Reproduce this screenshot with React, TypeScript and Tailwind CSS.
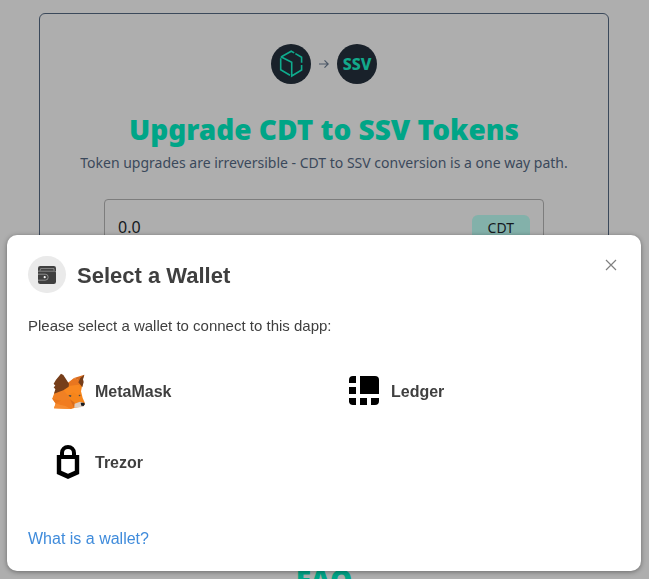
import type { ReactNode } from "react";

type Wallet = {
  name: string;
  icon: ReactNode;
};

const wallets: Wallet[] = [
  { name: "MetaMask", icon: <MetaMaskIcon /> },
  { name: "Ledger", icon: <LedgerIcon /> },
  { name: "Trezor", icon: <TrezorIcon /> }
];

export default function App() {
  return (
    <div className="h-screen overflow-hidden bg-[#aeaeae] font-['Noto_Sans',sans-serif]">
      <UpgradePage />
      <WalletModal />
    </div>
  );
}

function UpgradePage() {
  return (
    <main className="mx-auto max-w-[650px] pt-[13px] pr-10 pl-[39px]">
      <section className="flex min-h-[520px] flex-col items-center rounded-md border border-[#3b495b] pt-[30px]">
        <div className="flex items-center gap-2">
          <span className="flex size-10 items-center justify-center rounded-full bg-[#19212a]">
            <CdtLogo />
          </span>
          <ArrowIcon />
          <span className="flex size-10 items-center justify-center rounded-full bg-[#19212a] text-base font-extrabold text-[#13a98b]">
            SSV
          </span>
        </div>
        <h1 className="mt-[23px] text-center text-[28px] leading-11 font-black whitespace-nowrap text-[#00a587]">
          Upgrade CDT to SSV Tokens
        </h1>
        <p className="text-center text-sm leading-6 whitespace-nowrap text-[#3b495b]">
          Token upgrades are irreversible - CDT to SSV conversion is a one way path.
        </p>
        <div className="mt-6 flex h-20 w-full max-w-[440px] items-start justify-between rounded-sm border border-[#7d7d7d] px-[13px] pt-[15px]">
          <input
            aria-label="Amount"
            defaultValue="0.0"
            className="h-6 w-40 bg-transparent text-base text-[#15191d] outline-none"
          />
          <span className="rounded-md bg-[#83b1aa] px-4 py-px text-sm leading-6 text-[#15191d]">CDT</span>
        </div>
      </section>
      <h2 className="mt-7 text-center text-[28px] leading-9 font-black text-[#00a587]">FAQ</h2>
    </main>
  );
}

function WalletModal() {
  return (
    <div className="fixed inset-0 flex items-end justify-center p-2 pl-[7px]">
      <div
        role="dialog"
        aria-labelledby="wallet-title"
        className="relative w-full rounded-[10px] bg-white px-[21px] pt-[21px] pb-5 font-['Liberation_Sans',Arial,sans-serif] text-[#3f3f3f] shadow-[0_1px_5px_rgba(0,0,0,0.4)]"
      >
        <header className="flex items-center gap-[11px]">
          <span className="flex h-[37px] w-[38px] items-center justify-center rounded-full bg-[#eaeaea]">
            <WalletIcon />
          </span>
          <h3 id="wallet-title" className="pt-0.5 text-[22px] leading-8 font-bold">
            Select a Wallet
          </h3>
        </header>
        <p className="mt-[23px] text-[15px] leading-5">Please select a wallet to connect to this dapp:</p>
        <ul className="mt-5 grid grid-cols-2">
          {wallets.map((wallet) => (
            <li key={wallet.name} className="h-[71px]">
              <button type="button" className="flex h-[71px] items-center gap-2 pl-[21px] text-base font-bold">
                <span className="flex w-[38px] justify-center pb-0.5">{wallet.icon}</span>
                {wallet.name}
              </button>
            </li>
          ))}
        </ul>
        <a href="#wallet" className="mt-[29px] block w-fit text-base leading-6 text-[#3f8bdb]">
          What is a wallet?
        </a>
        <button type="button" aria-label="Close" className="absolute top-[22px] right-[22px] p-px">
          <svg viewBox="0 0 14 14" className="size-[14px]" fill="none" stroke="#808080" strokeWidth="1.2">
            <path d="M2 2 12 12M12 2 2 12" />
          </svg>
        </button>
      </div>
    </div>
  );
}

function CdtLogo() {
  return (
    <svg viewBox="0 0 26 28" className="h-7 w-[26px]" fill="none" stroke="#0fab8d" strokeWidth="1.6">
      <path d="M2.7 8.2v11.5l9.3 5.6" />
      <path d="M3 7 13.2 1.2l3 1.7" />
      <path d="M17.4 3.6 23.6 7.2v5.6" />
      <path d="M23.6 15v5L13.7 26V12.3L2.8 6.8" />
    </svg>
  );
}

function ArrowIcon() {
  return (
    <svg viewBox="0 0 10 10" className="size-[10px]" fill="none" stroke="#4b5766" strokeWidth="1.2">
      <path d="M0 5h9M5.5 1.3 9.2 5 5.5 8.7" />
    </svg>
  );
}

function WalletIcon() {
  return (
    <svg viewBox="0 0 18 18" className="size-[18px]">
      <rect width="18" height="18" rx="2.2" fill="#3f3f3f" />
      <path d="M0 5.2h16.5a1.5 1.5 0 0 1 1.5 1.2" fill="none" stroke="#a6a6a6" strokeWidth=".7" />
      <path d="M2 4.7 2.6 2.6H16v2" fill="none" stroke="#a6a6a6" strokeWidth=".7" />
      <path d="M0 8.2h7.2a3 3 0 0 1 0 6H0" fill="none" stroke="#b0b0b0" strokeWidth=".7" />
      <circle cx="6.7" cy="11.2" r="1.1" fill="#fff" />
    </svg>
  );
}

function MetaMaskIcon() {
  return (
    <svg viewBox="0 0 108 126" className="h-[42px] w-9">
      <path d="M14 66 38 42 58 38 70 26 98 40 93 64 98 84 105 100 100 109 76 113 62 117 12 115 17 100 7 86z" fill="#f6851b" />
      <path d="M54 38 72 24 97 34 86 46 55 50z" fill="#e9761f" />
      <path d="M103 14 72 24 96 35z" fill="#d96c1f" />
      <path d="M103 14 99 28 101 36 97 52 85 37 91 24z" fill="#763e1a" />
      <path d="M15 70 38 58 52 74 59 88 34 92 7 86z" fill="#f08024" />
      <path d="M7 86 34 92 17 101z" fill="#e8761e" />
      <path d="M34 92 60 88 72 112 62 117 46 108 17 101z" fill="#f17c20" />
      <path d="M17 101 46 108 62 117 12 115z" fill="#f68c32" />
      <path d="M60 88 74 98 72 113z" fill="#d86b1d" />
      <path d="M38 58 55 48 86 44 93 64 83 76 71 67 53 74z" fill="#f98820" />
      <path d="M33 11 40 15 57 41 56 50 40 61 12 71 16 58 11 52 16 47 11 41 18 29z" fill="#763e1a" />
      <path d="M74 101 90 95 104 100 101 109 92 112 73 113z" fill="#dccdc3" />
      <path d="M92 98 102 98 105 102 101 108 94 107z" fill="#191c22" />
      <path d="m56 75 8 1-1 5-6-2zM86 75l5-1v4l-4 1z" fill="#4a4a4a" />
    </svg>
  );
}

function LedgerIcon() {
  return (
    <svg viewBox="0 0 30 30" className="size-[30px]" fill="#000">
      <path d="M11 0h15a4 4 0 0 1 4 4v14H11z" />
      <path d="M4 0h3v7H0V4a4 4 0 0 1 4-4zM0 11h7v7H0zM0 22h7v7H4a4 4 0 0 1-4-3zM11 22h7v7h-7zM22 22h8v3a4 4 0 0 1-4 4h-4z" />
    </svg>
  );
}

function TrezorIcon() {
  return (
    <svg viewBox="0 0 24 34" className="h-[34px] w-6">
      <path
        fillRule="evenodd"
        d="M12 0a8 8 0 0 0-8 8v2H.8v19L12 34l11.2-5V10H20V8a8 8 0 0 0-8-8zm0 4A4 4 0 0 1 16 8v2H8V8A4 4 0 0 1 12 4zM5.2 14h13.6v11.8L12 28.8l-6.8-3z"
      />
    </svg>
  );
}
